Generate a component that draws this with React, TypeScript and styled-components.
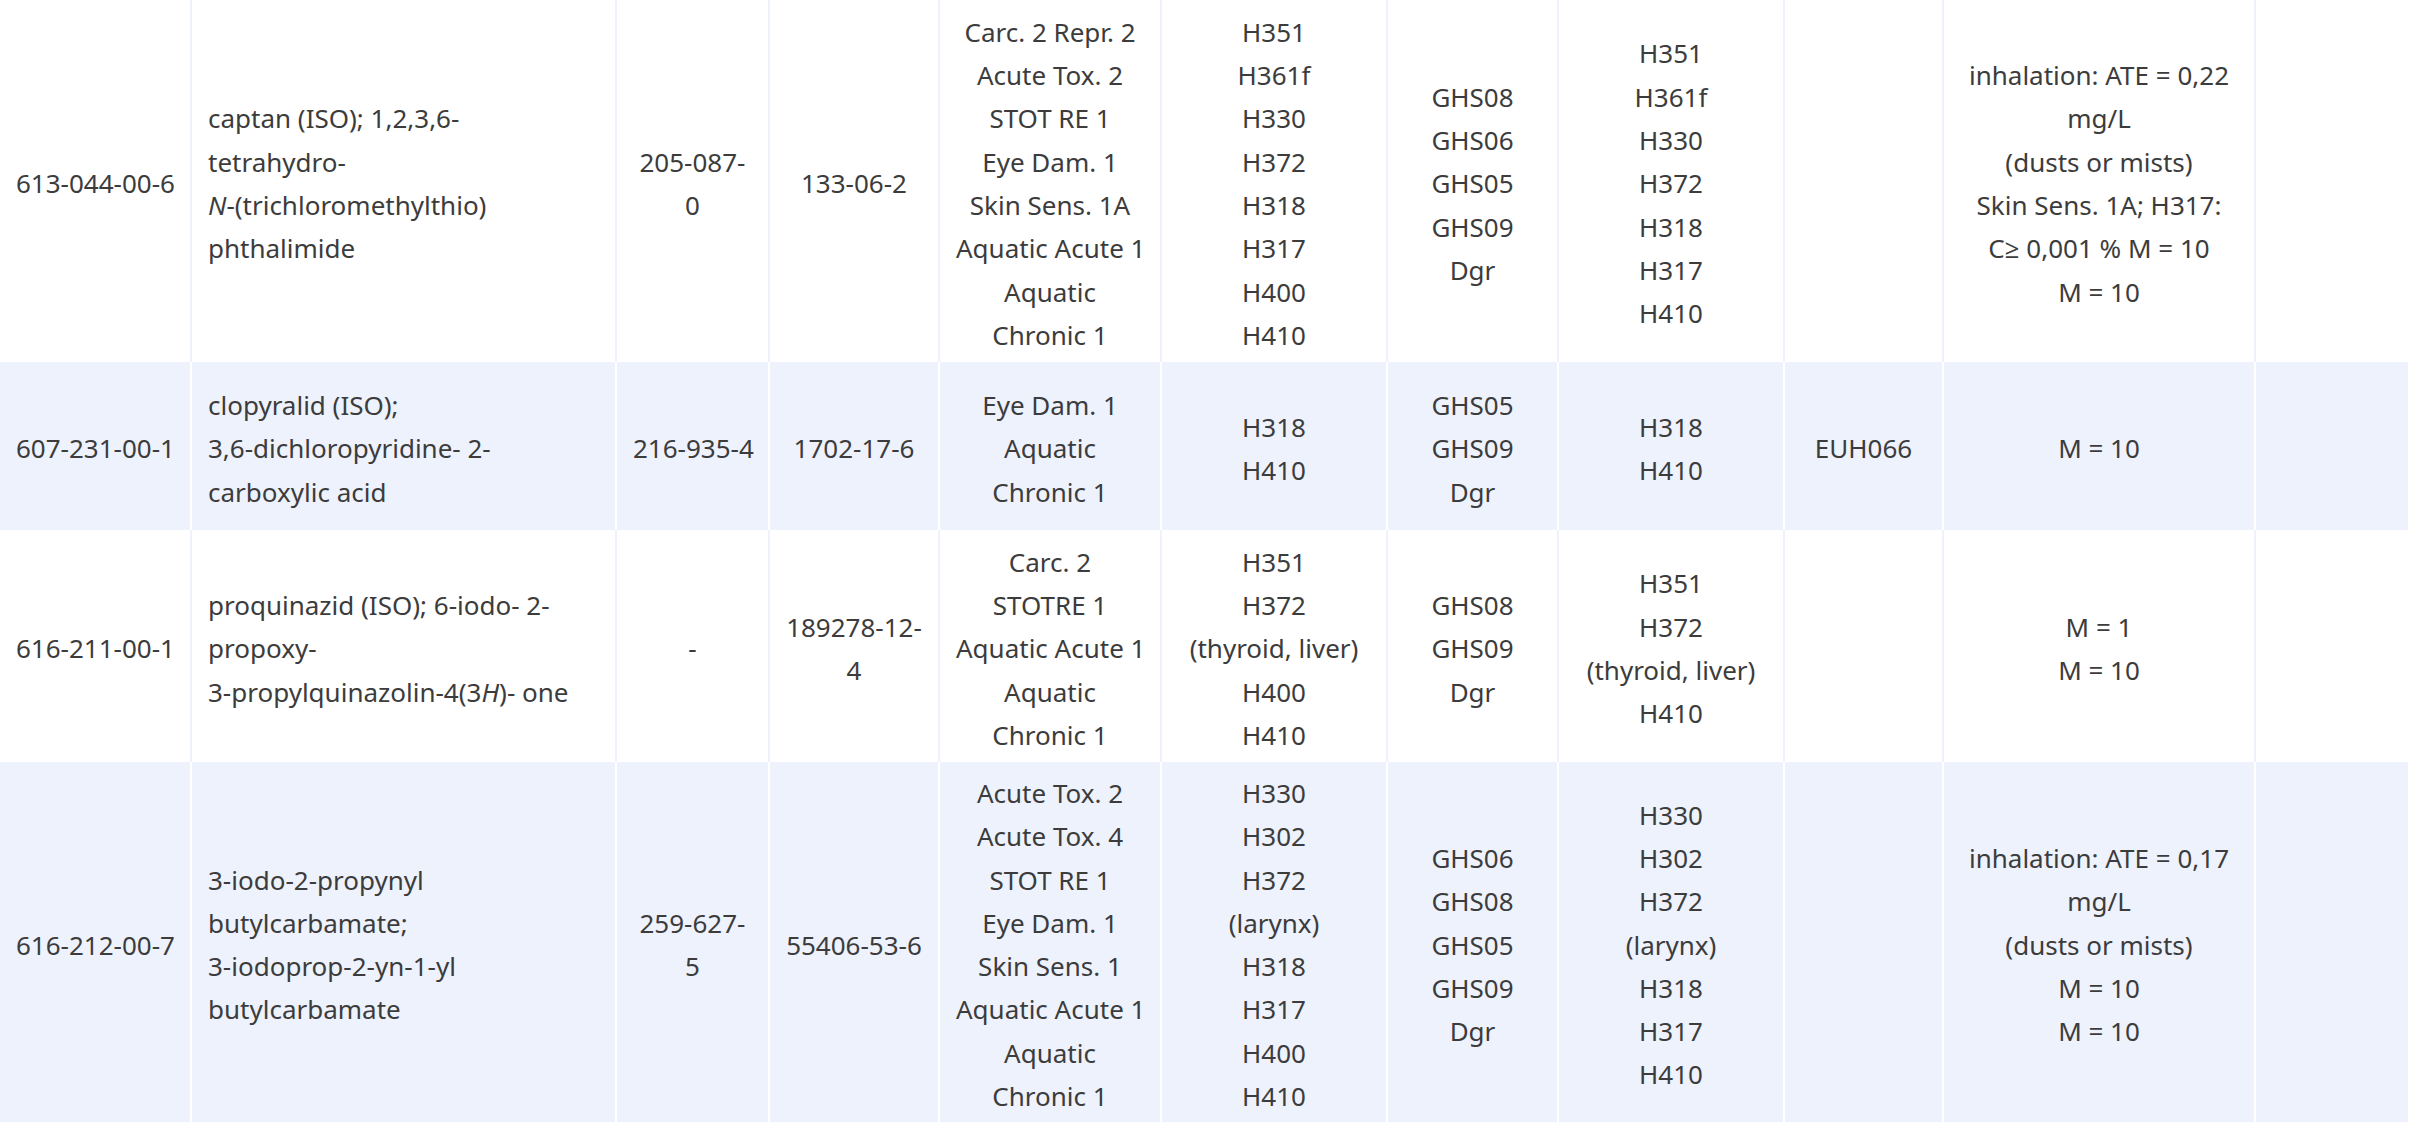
import React from "react";
import styled, { createGlobalStyle } from "styled-components";

const GlobalStyle = createGlobalStyle`
  html, body {
    margin: 0;
    padding: 0;
    background: #ffffff;
  }
  body {
    font-family: "Noto Sans", "Open Sans", sans-serif;
    color: #3c3c3c;
  }
`;

const COLS = [192, 425, 153, 170, 222, 226, 171, 226, 159, 312, 152];

const Table = styled.table`
  width: ${COLS.reduce((a, b) => a + b, 0)}px;
  table-layout: fixed;
  border-collapse: separate;
  border-spacing: 0;
  font-family: "Noto Sans", "Open Sans", sans-serif;
  font-size: 26px;
  line-height: 43.3px;
  color: #3c3c3c;
`;

const Row = styled.tr<{ $striped: boolean; $h: number }>`
  height: ${(p) => p.$h}px;
  background: ${(p) => (p.$striped ? "#eef2fd" : "#ffffff")};

  & > td {
    border-right: 2px solid ${(p) => (p.$striped ? "#ffffff" : "#eef2fd")};
  }
  & > td:last-child {
    border-right: none;
  }
`;

const Cell = styled.td<{ $left?: boolean }>`
  padding: 10px 16px 4px;
  vertical-align: middle;
  text-align: ${(p) => (p.$left ? "left" : "center")};
  overflow: hidden;
`;

const Line = styled.div`
  white-space: nowrap;
`;

const Em = styled.em`
  font-style: italic;
`;

type Content = React.ReactNode[];

type RowData = {
  h: number;
  striped: boolean;
  cells: Content[];
};

const rows: RowData[] = [
  {
    h: 362,
    striped: false,
    cells: [
      ["613-044-00-6"],
      [
        "captan (ISO); 1,2,3,6-",
        "tetrahydro-",
        <>
          <Em>N</Em>-(trichloromethylthio)
        </>,
        "phthalimide",
      ],
      ["205-087-", "0"],
      ["133-06-2"],
      [
        "Carc. 2 Repr. 2",
        "Acute Tox. 2",
        "STOT RE 1",
        "Eye Dam. 1",
        "Skin Sens. 1A",
        "Aquatic Acute 1",
        "Aquatic",
        "Chronic 1",
      ],
      ["H351", "H361f", "H330", "H372", "H318", "H317", "H400", "H410"],
      ["GHS08", "GHS06", "GHS05", "GHS09", "Dgr"],
      ["H351", "H361f", "H330", "H372", "H318", "H317", "H410"],
      [],
      [
        "inhalation: ATE = 0,22",
        "mg/L",
        "(dusts or mists)",
        "Skin Sens. 1A; H317:",
        "C≥ 0,001 % M = 10",
        "M = 10",
      ],
      [],
    ],
  },
  {
    h: 168,
    striped: true,
    cells: [
      ["607-231-00-1"],
      ["clopyralid (ISO);", "3,6-dichloropyridine- 2-", "carboxylic acid"],
      ["216-935-4"],
      ["1702-17-6"],
      ["Eye Dam. 1", "Aquatic", "Chronic 1"],
      ["H318", "H410"],
      ["GHS05", "GHS09", "Dgr"],
      ["H318", "H410"],
      ["EUH066"],
      ["M = 10"],
      [],
    ],
  },
  {
    h: 232,
    striped: false,
    cells: [
      ["616-211-00-1"],
      [
        "proquinazid (ISO); 6-iodo- 2-",
        "propoxy-",
        <>
          3-propylquinazolin-4(3<Em>H</Em>)- one
        </>,
      ],
      ["-"],
      ["189278-12-", "4"],
      ["Carc. 2", "STOTRE 1", "Aquatic Acute 1", "Aquatic", "Chronic 1"],
      ["H351", "H372", "(thyroid, liver)", "H400", "H410"],
      ["GHS08", "GHS09", "Dgr"],
      ["H351", "H372", "(thyroid, liver)", "H410"],
      [],
      ["M = 1", "M = 10"],
      [],
    ],
  },
  {
    h: 358,
    striped: true,
    cells: [
      ["616-212-00-7"],
      [
        "3-iodo-2-propynyl",
        "butylcarbamate;",
        "3-iodoprop-2-yn-1-yl",
        "butylcarbamate",
      ],
      ["259-627-", "5"],
      ["55406-53-6"],
      [
        "Acute Tox. 2",
        "Acute Tox. 4",
        "STOT RE 1",
        "Eye Dam. 1",
        "Skin Sens. 1",
        "Aquatic Acute 1",
        "Aquatic",
        "Chronic 1",
      ],
      ["H330", "H302", "H372", "(larynx)", "H318", "H317", "H400", "H410"],
      ["GHS06", "GHS08", "GHS05", "GHS09", "Dgr"],
      ["H330", "H302", "H372", "(larynx)", "H318", "H317", "H410"],
      [],
      [
        "inhalation: ATE = 0,17",
        "mg/L",
        "(dusts or mists)",
        "M = 10",
        "M = 10",
      ],
      [],
    ],
  },
];

export default function App() {
  return (
    <>
      <GlobalStyle />
      <Table>
        <colgroup>
          {COLS.map((w, i) => (
            <col key={i} style={{ width: w }} />
          ))}
        </colgroup>
        <tbody>
          {rows.map((r, ri) => (
            <Row key={ri} $h={r.h} $striped={r.striped}>
              {r.cells.map((c, ci) => (
                <Cell key={ci} $left={ci === 1}>
                  {c.map((l, li) => (
                    <Line key={li}>{l}</Line>
                  ))}
                </Cell>
              ))}
            </Row>
          ))}
        </tbody>
      </Table>
    </>
  );
}
